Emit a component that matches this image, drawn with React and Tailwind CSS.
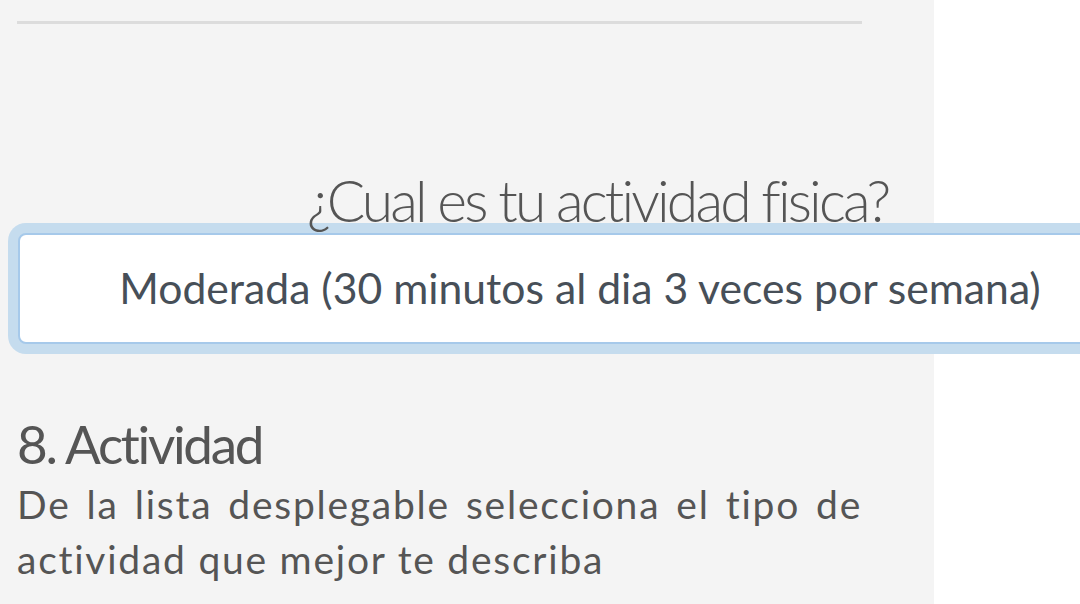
export default function App() {
  return (
    <div className="w-[1080px] h-[604px] overflow-hidden bg-white font-['Lato','Liberation_Sans',sans-serif]">
      <div className="w-[934px] h-full bg-[#f4f4f4] px-[17px] pt-[21px]">
        <div className="w-[845px] h-[3px] bg-[#dcdcdc]" />

        <h2 className="mt-[145.6px] h-[60px] pl-[290px] text-[57px] leading-[60px] font-light tracking-[-0.05em] text-[#555] whitespace-nowrap">
          ¿Cual es tu actividad fisica?
        </h2>

        <div className="mt-[3.4px] ml-[1px] w-[1124px] h-[111px] flex items-center justify-center bg-white border-2 border-[#a6c9ea] rounded-[8px] ring-[10px] ring-[#c5dcee] text-[42.7px] leading-[50px] text-[#474f58] whitespace-nowrap">
          Moderada (30 minutos al dia 3 veces por semana)
        </div>

        <h3 className="mt-[72px] h-[56px] text-[53px] leading-[56px] tracking-[-0.044em] text-[#555] whitespace-nowrap">
          8. Actividad
        </h3>

        <p className="mt-[5px] w-[845px] text-[39px] leading-[55px] tracking-[0.045em] text-[#555] text-justify">
          De la lista desplegable selecciona el tipo de actividad que mejor te describa
        </p>
      </div>
    </div>
  );
}
